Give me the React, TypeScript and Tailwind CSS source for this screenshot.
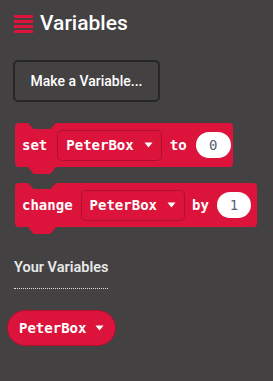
const mono = "font-['DejaVu_Sans_Mono',monospace]";

function Caret() {
  return (
    <svg width="9" height="6" viewBox="0 0 9 6" className="shrink-0">
      <path d="M0.5 0.5 H8.5 L4.5 5.5 Z" fill="#ffffff" />
    </svg>
  );
}

function Dropdown({ label }: { label: string }) {
  return (
    <div className="h-[31px] flex items-center gap-[10px] pl-[8px] pr-[8px] border border-[#b10f30] rounded-[5px] shrink-0">
      <span className={`${mono} text-[14px] font-semibold text-white leading-none`}>{label}</span>
      <Caret />
    </div>
  );
}

function NumberPill({ value, width }: { value: string; width: string }) {
  return (
    <div className={`${width} h-[26px] bg-white rounded-full flex items-center justify-center shrink-0`}>
      <span className={`${mono} text-[14px] text-[#575e75] leading-none`}>{value}</span>
    </div>
  );
}

function Block({ width, children }: { width: string; children: React.ReactNode }) {
  return (
    <div className={`relative ${width} h-[44px] bg-[#dc143c] rounded-[4px] flex items-center pl-[7px]`}>
      {/* notch on top */}
      <div className="absolute top-0 left-[13px] w-[28px] h-[6px] bg-[#434142] [clip-path:polygon(0_0,100%_0,80%_100%,20%_100%)]" />
      {/* tab below */}
      <div className="absolute top-[44px] left-[13px] w-[28px] h-[7px] bg-[#dc143c] [clip-path:polygon(0_0,100%_0,80%_100%,20%_100%)]" />
      {children}
    </div>
  );
}

export default function App() {
  return (
    <div className="w-[273px] h-[381px] bg-[#434142] overflow-hidden font-['Roboto',sans-serif]">
      <div className="h-[47px] flex items-center pl-[14px] gap-[7px]">
        <svg width="19" height="19" viewBox="0 0 19 19">
          <rect x="0" y="1" width="19" height="3" fill="#dc143c" />
          <rect x="0" y="6" width="19" height="3" fill="#dc143c" />
          <rect x="0" y="11" width="19" height="3" fill="#dc143c" />
          <rect x="0" y="16" width="19" height="3" fill="#dc143c" />
        </svg>
        <span className="text-[21px] font-medium text-white leading-none">Variables</span>
      </div>

      <div className="ml-[13px] mt-[13px] w-[147px] h-[42px] border-2 border-[#262626] rounded-[5px] flex items-center justify-center">
        <span className="text-[14px] font-medium text-white leading-none">Make a Variable...</span>
      </div>

      <div className="ml-[15px] mt-[21px]">
        <Block width="w-[218px]">
          <span className={`${mono} text-[14px] font-semibold text-white leading-none mr-[10px]`}>set</span>
          <Dropdown label="PeterBox" />
          <span className={`${mono} text-[14px] font-semibold text-white leading-none ml-[8px] mr-[9px]`}>to</span>
          <NumberPill value="0" width="w-[35px]" />
        </Block>
      </div>

      <div className="ml-[15px] mt-[16px]">
        <Block width="w-[242px]">
          <span className={`${mono} text-[14px] font-semibold text-white leading-none mr-[8px]`}>change</span>
          <Dropdown label="PeterBox" />
          <span className={`${mono} text-[14px] font-semibold text-white leading-none ml-[7px] mr-[8px]`}>by</span>
          <NumberPill value="1" width="w-[34px]" />
        </Block>
      </div>

      <div className="ml-[14px] mt-[34px] inline-block">
        <div className="text-[14.5px] font-semibold text-[#e8e8e8] leading-none pb-[12px] border-b border-dotted border-[#e0e0e0]">
          Your Variables
        </div>
      </div>

      <div className="ml-[7px] mt-[21px] w-[109px] h-[36px] bg-[#dc143c] border border-[#b10f30] rounded-full flex items-center pl-[11px] gap-[9px]">
        <span className={`${mono} text-[14px] font-semibold text-white leading-none`}>PeterBox</span>
        <Caret />
      </div>
    </div>
  );
}
